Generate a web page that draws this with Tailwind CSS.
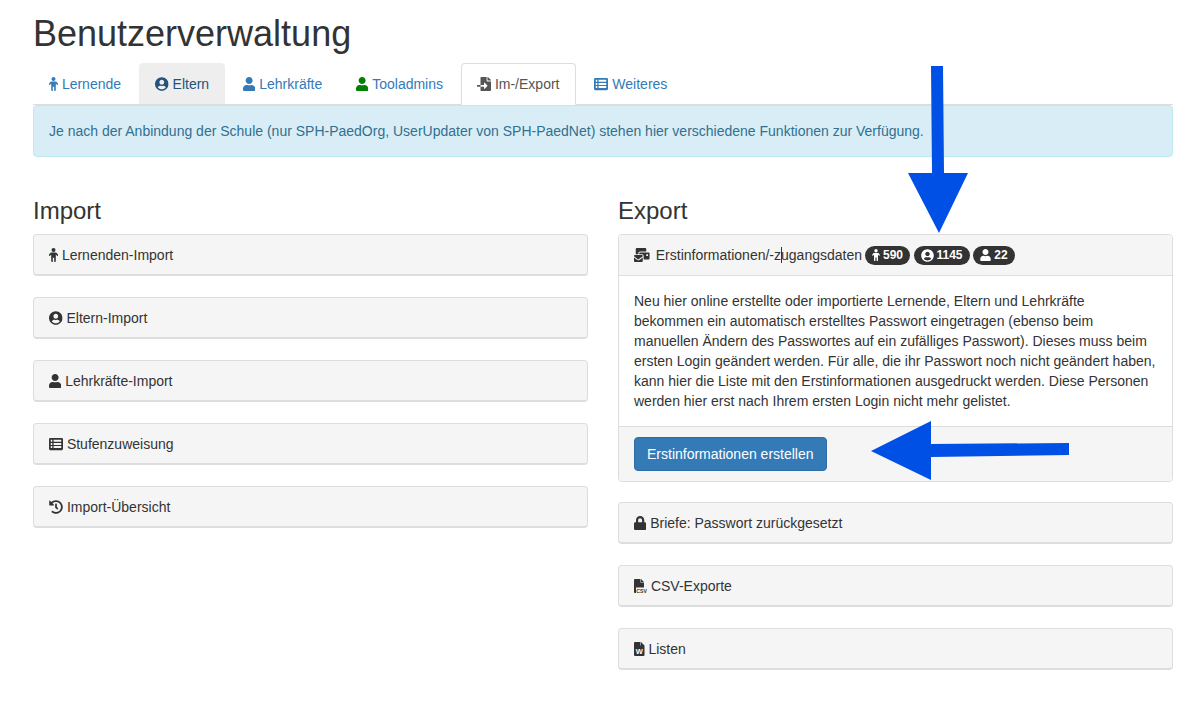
<!DOCTYPE html>
<html lang="de">

<head>
    <meta charset="UTF-8">
    <meta name="viewport" content="width=device-width, initial-scale=1.0">
    <title>Benutzerverwaltung</title>
    <script src="https://cdn.jsdelivr.net/npm/@tailwindcss/browser@4"></script>
</head>

<body class="bg-white text-[#333] text-[14px] leading-[20px] font-['Liberation_Sans',Arial,sans-serif]">
    <!-- ICONS -->
    <svg class="hidden">
        <symbol id="i-child" viewBox="0 0 9 14"><circle cx="4.5" cy="2" r="2" fill="currentColor"/><path fill="currentColor" d="M2.2 4.6h4.6c.4 0 .7.2.9.4L8.9 6.6c.3.4.2.9-.1 1.1-.4.3-.8.2-1.1-.1L6.8 6.500V13a1 1 0 0 1-1 1H5.200V9.800H3.800V14H3.200a1 1 0 0 1-1-1V6.500L1.300 7.600c-.3.3-.7.4-1.100.1-.3-.2-.4-.7-.1-1.100L1.300 5c.2-.2.5-.4.9-.4z"/></symbol>
        <symbol id="i-circle" viewBox="0 0 496 512"><path fill="currentColor" d="M248 8C111 8 0 119 0 256s111 248 248 248 248-111 248-248S385 8 248 8zm0 96c48.6 0 88 39.4 88 88s-39.4 88-88 88-88-39.4-88-88 39.4-88 88-88zm0 344c-58.7 0-111.3-26.6-146.5-68.2 18.8-35.4 55.6-59.8 98.5-59.8 2.4 0 4.8.4 7.1 1.1 13 4.2 26.6 6.9 40.9 6.9 14.3 0 28-2.7 40.9-6.9 2.3-.7 4.7-1.1 7.1-1.1 42.9 0 79.7 24.4 98.5 59.8C359.3 421.4 306.7 448 248 448z"/></symbol>
        <symbol id="i-user" viewBox="0 0 448 512"><path fill="currentColor" d="M224 256c70.7 0 128-57.3 128-128S294.7 0 224 0 96 57.3 96 128s57.3 128 128 128zm89.6 32h-16.7c-22.2 10.2-46.9 16-72.9 16s-50.6-5.8-72.9-16h-16.7C60.2 288 0 348.2 0 422.4V464c0 26.5 21.5 48 48 48h352c26.5 0 48-21.5 48-48v-41.6c0-74.2-60.2-134.4-134.4-134.4z"/></symbol>
        <symbol id="i-import" viewBox="0 0 512 512"><path fill="currentColor" d="M16 288c-8.8 0-16 7.2-16 16v32c0 8.8 7.2 16 16 16h112v-64zm489-183L407.1 7c-4.5-4.5-10.6-7-17-7H384v128h128v-6.1c0-6.3-2.5-12.4-7-16.9zm-153 31V0H152c-13.3 0-24 10.7-24 24v264h128v-65.2c0-14.3 17.3-21.4 27.4-11.3L379 308c6.6 6.7 6.6 17.4 0 24l-95.7 96.4c-10.1 10.1-27.4 3-27.4-11.3V352H128v136c0 13.3 10.7 24 24 24h336c13.3 0 24-10.7 24-24V160H376c-13.2 0-24-10.8-24-24z"/></symbol>
        <symbol id="i-table" viewBox="0 0 512 512"><path fill="currentColor" fill-rule="evenodd" d="M48 32h416a48 48 0 0 1 48 48v352a48 48 0 0 1-48 48H48a48 48 0 0 1-48-48V80a48 48 0 0 1 48-48zM64 104v72h56v-72zm104 0v72h280v-72zM64 216v72h56v-72zm104 0v72h280v-72zM64 328v72h56v-72zm104 0v72h280v-72z"/></symbol>
        <symbol id="i-history" viewBox="0 0 512 512"><path fill="currentColor" d="M504 255.531c.253 136.64-111.18 248.372-247.82 248.468-59.015.042-113.223-20.53-155.822-54.911-11.077-8.94-11.905-25.541-1.839-35.607l11.267-11.267c8.609-8.609 22.353-9.551 31.891-1.984C173.062 425.135 212.781 440 256 440c101.705 0 184-82.311 184-184 0-101.705-82.311-184-184-184-48.814 0-93.149 18.969-126.068 49.932l50.754 50.754c10.08 10.08 2.941 27.314-11.313 27.314H24c-8.837 0-16-7.163-16-16V38.627c0-14.254 17.234-21.393 27.314-11.314l49.372 49.372C129.209 34.136 189.552 8 256 8c136.81 0 247.747 110.78 248 247.531zm-180.912 78.784l9.823-12.63c8.138-10.463 6.253-25.542-4.21-33.679L288 256.349V152c0-13.255-10.745-24-24-24h-16c-13.255 0-24 10.745-24 24v135.651l65.409 50.874c10.463 8.137 25.541 6.253 33.679-4.21z"/></symbol>
        <symbol id="i-mail" viewBox="0 0 576 512"><path fill="currentColor" d="M160 448c-25.6 0-51.2-22.4-64-32-64-44.8-83.2-60.8-96-70.4V480c0 17.67 14.33 32 32 32h256c17.67 0 32-14.33 32-32V345.6c-12.8 9.6-32 25.6-96 70.4-12.8 9.6-38.4 32-64 32zm128-192H32c-17.67 0-32 14.33-32 32v16c25.6 19.2 22.4 19.2 115.2 86.4 9.6 3.2 28.8 25.6 44.8 25.6s35.2-22.4 44.8-28.8c92.8-67.2 89.6-67.2 115.2-86.4V288c0-17.67-14.33-32-32-32zm256-96H224c-17.67 0-32 14.33-32 32v32h96c33.21 0 60.59 25.42 63.71 57.82l.29-.22V416h192c17.67 0 32-14.33 32-32V192c0-17.67-14.33-32-32-32zm-32 128h-64v-64h64v64zm-352-96c0-35.29 28.71-64 64-64h224V32c0-17.67-14.33-32-32-32H96C78.33 0 64 14.33 64 32v192h96v-32z"/></symbol>
        <symbol id="i-lock" viewBox="0 0 448 512"><path fill="currentColor" d="M400 224h-24v-72C376 68.2 307.8 0 224 0S72 68.2 72 152v72H48c-26.5 0-48 21.5-48 48v192c0 26.5 21.5 48 48 48h352c26.5 0 48-21.5 48-48V272c0-26.5-21.5-48-48-48zm-104 0H152v-72c0-39.7 32.3-72 72-72s72 32.3 72 72v72z"/></symbol>
    </svg>

    <div class="w-[1140px] ml-[33px] pt-[14px]">
        <h1 class="text-[36px] leading-[40px] font-normal mb-[9px]">Benutzerverwaltung</h1>

        <!-- TABS -->
        <ul class="flex h-[42px] border-b border-[#ddd]">
            <li class="mr-[2px]"><a href="#" class="block h-[42px] px-[16px] py-[11px] rounded-t-[4px] text-[#337ab7]"><svg class="inline-block w-[9px] h-[14px] align-[-2px]"><use href="#i-child"/></svg> Lernende</a></li>
            <li class="mr-[2px]"><a href="#" class="block h-[41px] px-[16px] py-[11px] rounded-t-[4px] bg-[#eee] text-[#23527c]"><svg class="inline-block w-[13.6px] h-[14px] align-[-2px]"><use href="#i-circle"/></svg> Eltern</a></li>
            <li class="mr-[2px]"><a href="#" class="block h-[42px] px-[16px] py-[11px] rounded-t-[4px] text-[#337ab7]"><svg class="inline-block w-[12.25px] h-[14px] align-[-2px]"><use href="#i-user"/></svg> Lehrkräfte</a></li>
            <li class="mr-[2px]"><a href="#" class="block h-[42px] px-[16px] py-[11px] rounded-t-[4px] text-[#337ab7]"><svg class="inline-block w-[12.25px] h-[14px] align-[-2px] text-[#008000]"><use href="#i-user"/></svg> Tooladmins</a></li>
            <li class="mr-[2px]"><a href="#" class="block h-[42px] pl-[15px] pr-[16px] py-[10px] rounded-t-[4px] bg-white border border-[#ddd] border-b-white text-[#555]"><svg class="inline-block w-[14px] h-[14px] align-[-2px]"><use href="#i-import"/></svg> Im-/Export</a></li>
            <li><a href="#" class="block h-[42px] px-[16px] py-[11px] rounded-t-[4px] text-[#337ab7]"><svg class="inline-block w-[14px] h-[14px] align-[-2px]"><use href="#i-table"/></svg> Weiteres</a></li>
        </ul>

        <div class="p-[15px] bg-[#d9edf7] border border-[#bce8f1] rounded-[4px] text-[#31708f]">
            Je nach der Anbindung der Schule (nur SPH-PaedOrg, UserUpdater von SPH-PaedNet) stehen hier verschiedene Funktionen zur Verfügung.
        </div>

        <div class="grid grid-cols-2 gap-[30px] mt-[41px]">
            <!-- IMPORT -->
            <div>
                <h3 class="text-[24px] leading-[26px] font-normal mb-[10px]">Import</h3>
                <div class="flex flex-col gap-[21px]">
                    <div class="h-[42px] px-[15px] py-[10px] bg-[#f5f5f5] border border-[#ddd] border-b-2 rounded-[4px]"><svg class="inline-block w-[9px] h-[14px] align-[-2px]"><use href="#i-child"/></svg> Lernenden-Import</div>
                    <div class="h-[42px] px-[15px] py-[10px] bg-[#f5f5f5] border border-[#ddd] border-b-2 rounded-[4px]"><svg class="inline-block w-[13.6px] h-[14px] align-[-2px]"><use href="#i-circle"/></svg> Eltern-Import</div>
                    <div class="h-[42px] px-[15px] py-[10px] bg-[#f5f5f5] border border-[#ddd] border-b-2 rounded-[4px]"><svg class="inline-block w-[12.25px] h-[14px] align-[-2px]"><use href="#i-user"/></svg> Lehrkräfte-Import</div>
                    <div class="h-[42px] px-[15px] py-[10px] bg-[#f5f5f5] border border-[#ddd] border-b-2 rounded-[4px]"><svg class="inline-block w-[14px] h-[14px] align-[-2px]"><use href="#i-table"/></svg> Stufenzuweisung</div>
                    <div class="h-[42px] px-[15px] py-[10px] bg-[#f5f5f5] border border-[#ddd] border-b-2 rounded-[4px]"><svg class="inline-block w-[14px] h-[14px] align-[-2px]"><use href="#i-history"/></svg> Import-Übersicht</div>
                </div>
            </div>

            <!-- EXPORT -->
            <div>
                <h3 class="text-[24px] leading-[26px] font-normal mb-[10px]">Export</h3>
                <div class="flex flex-col gap-[21px]">
                    <div class="relative -mb-px border border-[#ddd] rounded-[4px] overflow-hidden">
                        <div class="h-[41px] px-[15px] py-[10px] bg-[#f5f5f5] border-b border-[#ddd] flex items-center whitespace-pre">
                            <svg class="w-[15.75px] h-[14px] mr-[6px]"><use href="#i-mail"/></svg><span>Erstinformationen/-zugangsdaten</span>
                            <span class="ml-[3px] h-[19px] w-[45px] flex items-center justify-center gap-[3px] rounded-full bg-[#333] text-white text-[12px] leading-none font-bold"><svg class="w-[8px] h-[12px]"><use href="#i-child"/></svg>590</span>
                            <span class="ml-[4px] h-[19px] w-[56px] flex items-center justify-center gap-[2px] rounded-full bg-[#333] text-white text-[12px] leading-none font-bold"><svg class="w-[13px] h-[13px]"><use href="#i-circle"/></svg>1145</span>
                            <span class="ml-[3px] h-[19px] w-[42px] flex items-center justify-center gap-[3px] rounded-full bg-[#333] text-white text-[12px] leading-none font-bold"><svg class="w-[11px] h-[12px]"><use href="#i-user"/></svg>22</span>
                        </div>
                        <!-- text cursor from the screenshot -->
                        <div class="absolute left-[162px] top-[12px] w-px h-[16px] bg-[#333]"></div>
                        <div class="p-[15px] bg-white">
                            Neu hier online erstellte oder importierte Lernende, Eltern und Lehrkräfte bekommen ein automatisch erstelltes Passwort eingetragen (ebenso beim manuellen Ändern des Passwortes auf ein zufälliges Passwort). Dieses muss beim ersten Login geändert werden. Für alle, die ihr Passwort noch nicht geändert haben, kann hier die Liste mit den Erstinformationen ausgedruckt werden. Diese Personen werden hier erst nach Ihrem ersten Login nicht mehr gelistet.
                        </div>
                        <div class="h-[55px] px-[15px] py-[10px] bg-[#f5f5f5] border-t border-[#ddd]">
                            <button class="h-[34px] px-[12px] bg-[#337ab7] border border-[#2e6da4] rounded-[4px] text-white">Erstinformationen erstellen</button>
                        </div>
                    </div>
                    <div class="h-[42px] px-[15px] py-[10px] bg-[#f5f5f5] border border-[#ddd] border-b-2 rounded-[4px]"><svg class="inline-block w-[12.25px] h-[14px] align-[-2px]"><use href="#i-lock"/></svg> Briefe: Passwort zurückgesetzt</div>
                    <div class="h-[42px] px-[15px] py-[10px] bg-[#f5f5f5] border border-[#ddd] border-b-2 rounded-[4px]">
                        <svg class="inline-block w-[13px] h-[14px] align-[-2px]" viewBox="0 0 13 14"><path fill="currentColor" d="M1 0h5.500v3.500H10v10.500H1a1 1 0 0 1-1-1V1a1 1 0 0 1 1-1zM7 0l3 3H7z"/><rect x="2" y="8.500" width="11" height="5.500" fill="#f5f5f5"/><text x="2.300" y="13.600" font-size="5.200" font-weight="700" fill="currentColor" font-family="Liberation Sans">CSV</text></svg> CSV-Exporte
                    </div>
                    <div class="h-[42px] px-[15px] py-[10px] bg-[#f5f5f5] border border-[#ddd] border-b-2 rounded-[4px]">
                        <svg class="inline-block w-[10.5px] h-[14px] align-[-2px]" viewBox="0 0 10.5 14"><path fill="currentColor" d="M1 0h5.500v3.500H10.500V13a1 1 0 0 1-1 1H1a1 1 0 0 1-1-1V1a1 1 0 0 1 1-1zM7 0l3.500 3.500H7z"/><text x="5.250" y="12" text-anchor="middle" font-size="7.500" font-weight="700" fill="#fff" font-family="Liberation Sans">W</text></svg> Listen
                    </div>
                </div>
            </div>
        </div>
    </div>

    <!-- ARROWS drawn on top of the screenshot -->
    <svg class="absolute left-0 top-0 pointer-events-none" width="1193" height="709" viewBox="0 0 1193 709">
        <path fill="#0050e6" d="M931 66h12l1 107h24l-29 60-31-60h24z"/>
        <path fill="#0050e6" d="M871 451l60-30v23l138-1v12l-138 2v23z"/>
    </svg>
</body>

</html>
